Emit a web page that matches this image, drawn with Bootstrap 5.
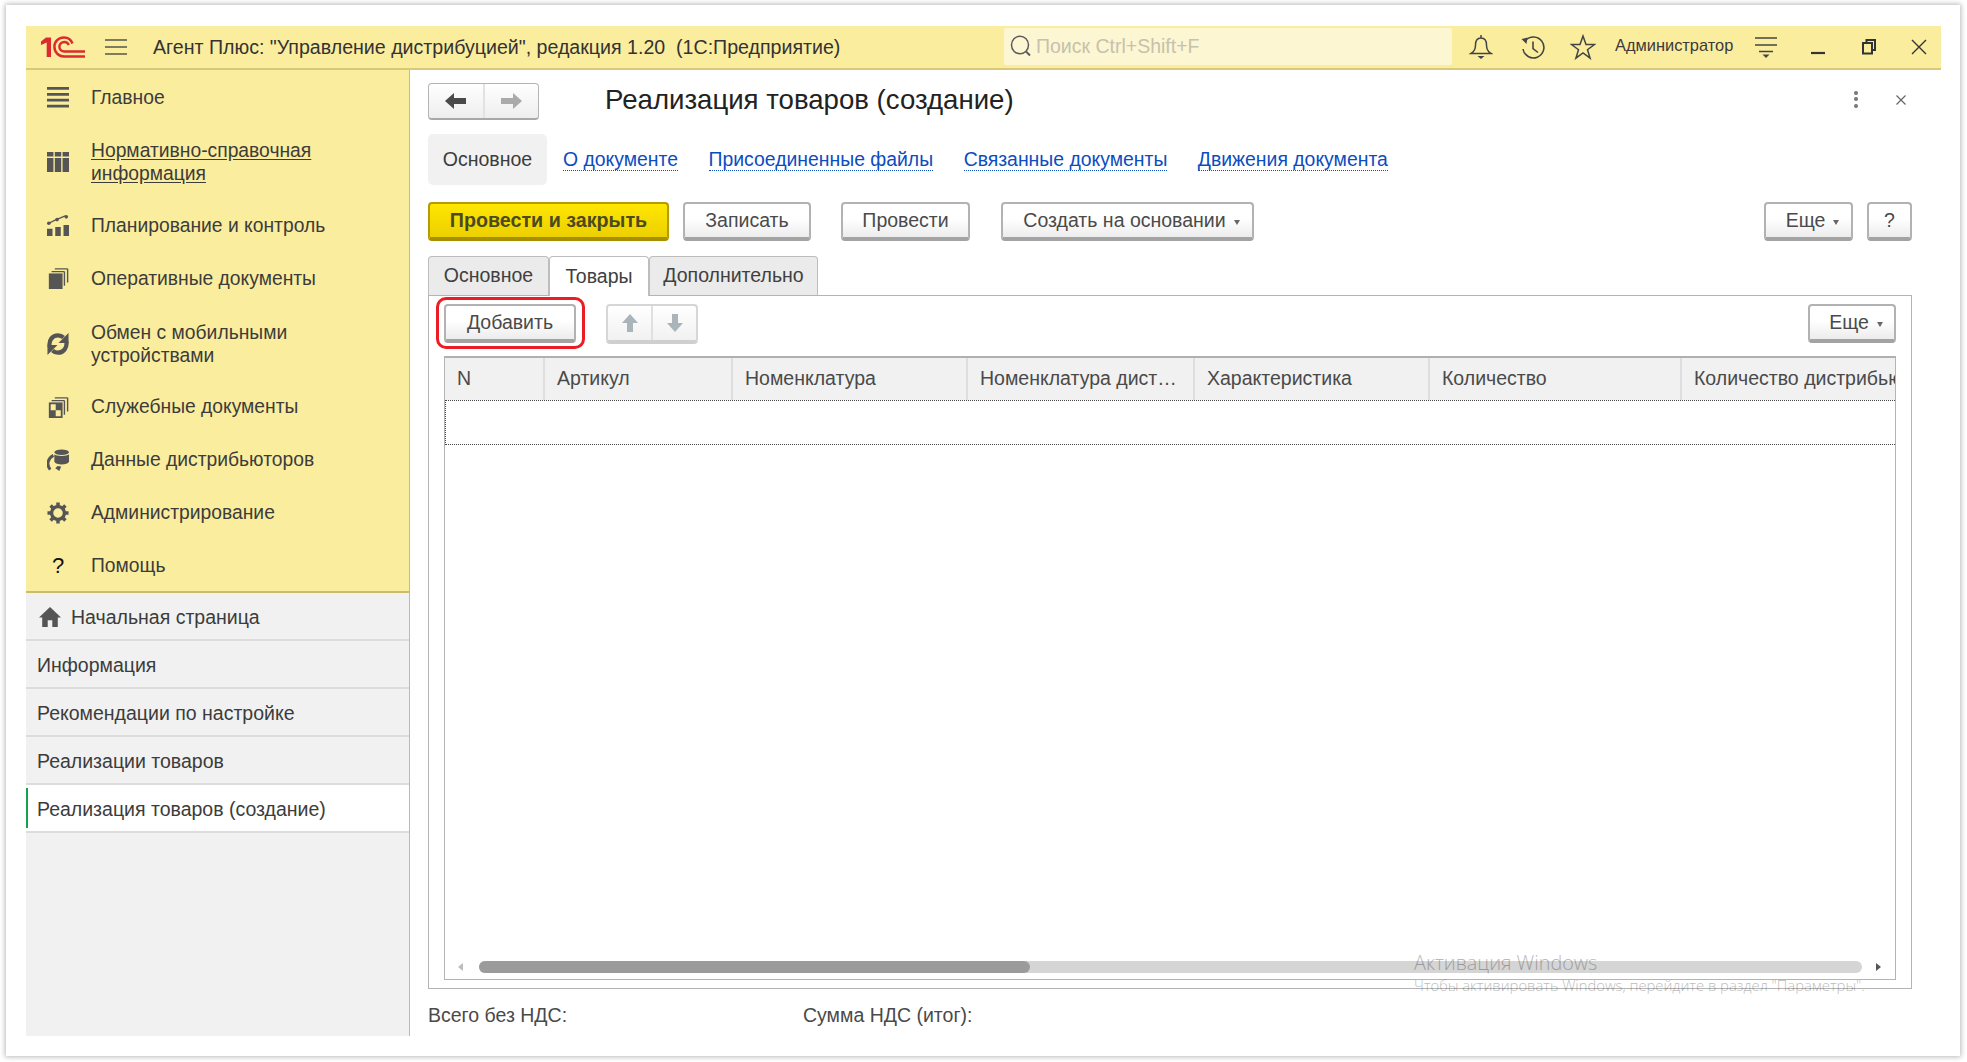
<!DOCTYPE html>
<html lang="ru">
<head>
<meta charset="utf-8">
<title>Реализация товаров (создание)</title>
<link href="https://cdn.jsdelivr.net/npm/bootstrap@5.3.0/dist/css/bootstrap.min.css" rel="stylesheet">
<style>
html,body{height:100%;margin:0;background:#fff;overflow:hidden}
body{font-family:"Liberation Sans",Arial,sans-serif;font-size:19.5px;color:#4a4a4a;line-height:23px}
.sheet{position:absolute;left:6px;top:5px;width:1954px;height:1051px;background:#fff;box-shadow:0 0 5px 1px rgba(0,0,0,.28);padding:21px 19px 20px 20px}
.appwin{height:100%;display:flex;flex-direction:column}
.topbar{height:44px;flex:none;background:#fbed9e;border-bottom:2px solid #d8c877;display:flex;align-items:center;color:#333}
.logo1c{margin-left:15px;width:44px;height:22px;flex:none}
.burger{margin-left:20px;width:22px;height:16px;flex:none}
.apptitle{margin-left:26px;width:851px;white-space:nowrap;flex:none;font-size:19.6px}
.searchbox{width:448px;height:37px;flex:none;background:#fdf6d3;border-radius:2px;display:flex;align-items:center;color:#c6c2ac;padding-left:4px;margin-top:-2px}
.searchbox svg{margin-right:2px}
.ticons{display:flex;align-items:center;flex:1}
.ti{flex:none;display:flex;justify-content:center;align-items:center}
.ti-bell{width:58px}.ti-hist{width:46px}.ti-star{width:54px}.ti-filt{width:62px}.ti-min{width:42px}.ti-rest{width:60px}.ti-close{width:40px}
.username{font-size:16.4px;margin:-3px 0 0 5px;width:120px;white-space:nowrap;flex:none;color:#3b3b3b}
.mainwrap{flex:1;display:flex;min-height:0}
.sidepane{width:384px;flex:none;background:#f1f1f1;border-right:1px solid #c9bf73;display:flex;flex-direction:column}
.sections{background:#fbed9e;border-bottom:2px solid #cdbc6b;height:523px;flex:none}
.secitem{display:flex;align-items:center;color:#3c3c3c;height:53px;font-size:19.3px}
.secitem svg{width:22px;height:24px;margin-left:21px;flex:none;fill:#555}
.secitem span{margin-left:22px}
.secitem u{text-underline-offset:2px}
.sec-a{height:54px}.sec-b{height:75px}.sec-c{height:53px}.sec-d{height:52px}.sec-e{height:72px;margin-top:4px}
.qmark{fill:#111;font-family:"Liberation Sans",sans-serif;font-size:24px}
.openitem{height:48px;padding:2px 0 0 11px;display:flex;align-items:center;border-bottom:2px solid #dcdcdc;color:#3c3c3c;background:#f1f1f1;position:relative}
.openitem.homeitem{padding-left:13px}
.homeitem svg{margin-right:10px}
.openitem.current{background:#fff}
.openitem.current::before{content:"";position:absolute;left:0;top:3px;bottom:3px;width:2px;background:#13a04f}
.docpane{flex:1;min-width:0;padding:12px 29px 0 18px;display:flex;flex-direction:column;background:#fff}
.headrow{display:flex;align-items:center;height:38px;flex:none}
.navgrp{width:111px;height:37px;border:1px solid #b4b4b4;border-bottom:2px solid #a8a8a8;border-radius:4px;background:linear-gradient(#fff,#eee);display:flex;flex:none}
.navgrp div{flex:1;display:flex;align-items:center;justify-content:center}
.navgrp div+div{border-left:2px solid #e2e2e2}
.doctitle{margin-left:66px;font-size:27.6px;color:#222;white-space:nowrap;line-height:34px;margin-top:-2px}
.kebab{margin-left:auto;margin-right:38px;width:4px;display:flex;flex-direction:column;gap:2.5px;margin-top:-4px}
.kebab i{display:block;width:4px;height:4px;border-radius:50%;background:#777}
.closer{margin-right:6px;margin-top:-3px;display:flex}
.subnav{display:flex;align-items:center;height:51px;margin-top:14px;gap:30.5px;flex:none}
.subnav .here{width:119px;height:51px;background:#f1f1f1;border-radius:5px;display:flex;align-items:center;justify-content:center;color:#3c3c3c;margin-right:-14.500px}
.subnav a{color:#0b4dc0;text-decoration:none;border-bottom:1px dotted #0b4dc0;line-height:21px;white-space:nowrap;font-size:19.4px;margin-top:1px}
.cmdrow{display:flex;height:39px;margin-top:17px;flex:none}
.cbtn{height:39px;padding:0;flex:none;display:flex;align-items:center;justify-content:center;border:2px solid #b2b2b2;border-bottom:4px solid #a3a3a3;border-radius:4px;background:linear-gradient(#fff 45%,#ececec);color:#4a4a4a;font-size:19.5px;line-height:23px}
.cbtn.hot{border-color:#b39b00;border-bottom-color:#a79000;background:linear-gradient(#ffe600,#ecd000);font-weight:700;color:#4b4a22;font-size:19.7px}
.cbtn.withcaret{padding-left:8px}
.w-hot{width:241px}.w-save{width:128px;margin-left:14px}.w-post{width:129px;margin-left:30px}.w-base{width:253px;margin-left:31px}.w-more{width:89px}.w-help{width:45px;margin-left:14px}.w-add{width:132px}.w-more2{width:88px}
.caret7{display:inline-block;border-top:5px solid #666;border-left:3.5px solid transparent;border-right:3.5px solid transparent;margin-left:8px;margin-top:3px}
.tabline{display:flex;margin-top:15px;height:39px;flex:none;position:relative;z-index:1}
.tabcell{display:flex;align-items:center;justify-content:center;background:#ebebeb;border:1px solid #bdbdbd;border-bottom:0;border-radius:4px 4px 0 0;height:39px;color:#404040;padding-bottom:1px}
.tabcell.open{background:#fff;height:40px;color:#404040}
.t-a{width:121px}.t-b{width:100px}.t-c{width:169px}
.panelbox{flex:none;height:694px;border:1px solid #b4b4b4;padding:8px 15px 8px 15px;display:flex;flex-direction:column}
.panelbar{display:flex;height:40px;flex:none;position:relative}
.redmark{position:absolute;left:-8px;top:-7px;width:149px;height:52px;border:3.5px solid #ec1c24;border-radius:10px}
.arrowgrp{margin-left:30px;width:92px;height:40px;border:2px solid #d6d6d6;border-bottom:4px solid #cfcfcf;border-radius:4px;background:linear-gradient(#fff,#f1f1f1);display:flex}
.arrowgrp div{flex:1;display:flex;align-items:center;justify-content:center}
.arrowgrp div+div{border-left:2px solid #e0e0e0}
.gridbox{flex:1;margin-top:12px;border:1px solid #b4b4b4;border-top:2px solid #b0b0b0;position:relative;overflow:hidden;display:flex;flex-direction:column}
.gridhead{height:42px;flex:none;display:flex;background:#f1f1f1;white-space:nowrap;overflow:hidden}
.gridhead div{flex:none;padding:0 0 2px 12px;display:flex;align-items:center;border-right:2px solid #dedede;overflow:hidden}
.c-1{width:100px}.c-2{width:188px}.c-3{width:235px}.c-4{width:227px}.c-5{width:235px}.c-6{width:252px}
.gridhead .c-7{width:300px;border-right:0}
.gridrow{height:45px;flex:none;border:1px dotted #444;border-right:0}
.gridfill{flex:1}
.hscroll{position:absolute;left:0;right:0;bottom:6px;height:12px;display:flex;align-items:center}
.hleft{margin-left:13px;width:0;height:0;border-right:5px solid #bdbdbd;border-top:4px solid transparent;border-bottom:4px solid transparent}
.htrack{margin-left:16px;width:1383px;height:12px;background:#d5d5d5;border-radius:6px;display:flex}
.hthumb{width:551px;height:12px;background:#9b9b9b;border-radius:6px}
.hright{margin-left:14px;width:0;height:0;border-left:5px solid #555;border-top:4px solid transparent;border-bottom:4px solid transparent}
.totals{display:flex;height:23px;margin-top:15px;flex:none}
.totals span:first-child{width:375px}
.winmark{position:absolute;left:1414px;top:949px;color:#000;opacity:.27;font-family:"Open Sans",sans-serif;font-weight:300;pointer-events:none;white-space:nowrap;z-index:3}
.winmark b{display:block;font-weight:300;font-size:19.8px;line-height:27px}
.winmark small{display:block;font-size:14.8px;line-height:18px}
</style>
</head>
<body>
<div class="sheet">
<div class="appwin">
  <header class="topbar">
    <svg class="logo1c" viewBox="0 0 44 22" fill="none" stroke="#dc2a2e">
      <path d="M0 5.500 5 1.500H10V21H5.700V6.500L0 9z" fill="#dc2a2e" stroke="none"/>
      <path d="M31.500 7.500C30 3.500 26.500 1.500 23 1.500 17.500 1.500 13.400 5.500 13.400 10.800S17.500 20.500 23 20.500H44" stroke-width="2.500"/>
      <path d="M27.800 9C27 7 25.300 6 23.400 6 20.500 6 18.400 8 18.400 10.800S20.500 15.500 23.400 15.500H44" stroke-width="2.500"/>
    </svg>
    <svg class="burger" viewBox="0 0 22 16" stroke="#55554a" stroke-width="1.600"><path d="M0 1H22M0 8H22M0 15H22"/></svg>
    <div class="apptitle">Агент Плюс: "Управление дистрибуцией", редакция 1.20&nbsp; (1С:Предприятие)</div>
    <div class="searchbox">
      <svg width="26" height="26" viewBox="0 0 26 26" fill="none" stroke="#5b5b5b" stroke-width="1.500"><ellipse cx="12" cy="12" rx="8.500" ry="8.700"/><path d="M18 18.500l4 4" stroke-width="2"/></svg>
      <span>Поиск Ctrl+Shift+F</span>
    </div>
    <div class="ticons">
      <div class="ti ti-bell"><svg width="24" height="26" viewBox="0 0 24 26" fill="none" stroke="#444" stroke-width="1.500"><path d="M12 1v3M12 4c-4 0-5.500 3-5.500 7 0 4-1 6.500-4.500 8.500h20c-3.500-2-4.500-4.500-4.500-8.500 0-4-1.500-7-5.500-7z"/><path d="M8.500 22h7L12 25z" fill="#444" stroke="none"/></svg></div>
      <div class="ti ti-hist"><svg width="26" height="26" viewBox="0 0 26 26" fill="none" stroke="#444" stroke-width="1.600"><path d="M5.500 6.500A10.500 10.500 0 1 1 3 15"/><path d="M1.500 5 7.500 3.500 6.500 10z" fill="#444" stroke="none"/><path d="M13 7.500v7l5 4"/></svg></div>
      <div class="ti ti-star"><svg width="26" height="26" viewBox="0 0 26 26" fill="none" stroke="#444" stroke-width="1.500"><path d="M13 2l3 8.500h8.500l-7 5.200 2.600 8.500-7.100-5.200-7.100 5.200 2.600-8.500-7-5.200H10z"/></svg></div>
      <div class="username">Администратор</div>
      <div class="ti ti-filt"><svg width="22" height="24" viewBox="0 0 22 24" fill="#444" stroke="#444" stroke-width="1.500"><path d="M0 3H22M0 10H22M4 16.500H18" fill="none"/><path d="M7.500 19.500h7L11 23z" stroke="none"/></svg></div>
      <div class="ti ti-min"><svg width="16" height="22" viewBox="0 0 16 22"><path d="M1 17H15" stroke="#333" stroke-width="2.200"/></svg></div>
      <div class="ti ti-rest"><svg width="16" height="18" viewBox="0 0 16 18" fill="none" stroke="#333" stroke-width="2"><path d="M5.500 4.500V2H14V12H11"/><rect x="2" y="5" width="9" height="10.500"/></svg></div>
      <div class="ti ti-close"><svg width="16" height="18" viewBox="0 0 16 18" fill="none" stroke="#333" stroke-width="1.400"><path d="M1 2 15 16M15 2 1 16"/></svg></div>
    </div>
  </header>
  <div class="mainwrap">
    <aside class="sidepane">
      <nav class="sections">
        <div class="secitem sec-a"><svg viewBox="0 0 24 24"><path d="M0 1h24v3H0zM0 7.500h24v3H0zM0 14h24v3H0zM0 20.500h24v3H0z"/></svg><span>Главное</span></div>
        <div class="secitem sec-b"><svg viewBox="0 0 24 24"><path d="M0 1h7v5H0zM8.500 1h7v5h-7zM17 1h7v5h-7zM0 7.500h7V23H0zM8.500 7.500h7V23h-7zM17 7.500h7V23h-7z"/></svg><span><u>Нормативно-справочная<br>информация</u></span></div>
        <div class="secitem sec-c"><svg viewBox="0 0 24 24"><path d="M0 15h6v8H0zM9 13h6v10H9zM18 11h6v12h-6z"/><path d="M2 9l8-4 10-4" fill="none" stroke="#555" stroke-width="1.500"/><circle cx="2" cy="9" r="2"/><circle cx="11" cy="5" r="2"/><circle cx="21" cy="2" r="2"/></svg><span>Планирование и контроль</span></div>
        <div class="secitem sec-d"><svg viewBox="0 0 24 24"><path d="M2 7h15v17H2z"/><path d="M19 5v15.500M22.500 2v15M5 5h14M8.500 2h14" fill="none" stroke="#555" stroke-width="1.500"/></svg><span>Оперативные документы</span></div>
        <div class="secitem sec-e"><svg viewBox="0 0 24 24"><path d="M3 15C1.500 8 6 2.500 12 2.500c2.500 0 4.500 1 6 2.500" stroke="#555" stroke-width="4.600" fill="none"/><path d="M21 9c1.500 7-3 12.500-9 12.500-2.500 0-4.500-1-6-2.500" stroke="#555" stroke-width="4.600" fill="none"/><path d="M23.500 0v11h-11zM.5 24V13h11z"/></svg><span>Обмен с мобильными<br>устройствами</span></div>
        <div class="secitem"><svg viewBox="0 0 24 24"><path d="M2 7h15v17H2z"/><path d="M19 5v15.500M22.500 2v15M5 5h14M8.500 2h14" fill="none" stroke="#555" stroke-width="1.500"/><path d="M4 9h5.500v6.500H4zM9.500 15.500H15V22H9.500z" fill="#fbed9e"/></svg><span>Служебные документы</span></div>
        <div class="secitem"><svg viewBox="0 0 24 24"><ellipse cx="16" cy="3.500" rx="8" ry="3"/><path d="M8 6c2 2 14 2 16 0v8c-1 2-4 3-8 3C12 17 9 16 8 14z"/><path d="M7 7C1 10-1 17 3.500 22.500" fill="none" stroke="#555" stroke-width="3.200"/><path d="M9 21l2.500-2.500 4 .5-2 5z"/></svg><span>Данные дистрибьюторов</span></div>
        <div class="secitem"><svg viewBox="0 0 24 24"><circle cx="12" cy="12" r="7" stroke="#555" stroke-width="3.600" fill="none"/><path d="M12 .5v5M12 18.500v5M.5 12h5M18.500 12h5M3.900 3.900l3.500 3.500M16.600 16.600l3.500 3.500M20.100 3.900l-3.500 3.500M7.400 16.600l-3.500 3.500" stroke="#555" stroke-width="3.800" fill="none"/></svg><span>Администрирование</span></div>
        <div class="secitem"><svg viewBox="0 0 24 24"><text class="qmark" x="12" y="20" text-anchor="middle">?</text></svg><span>Помощь</span></div>
      </nav>
      <div class="openitem homeitem"><svg width="22" height="20" viewBox="0 0 24 21" fill="#555" preserveAspectRatio="none"><path d="M12 0 24 11h-3.500v10h-6v-7h-5v7h-6V11H0z"/></svg><span>Начальная страница</span></div>
      <div class="openitem">Информация</div>
      <div class="openitem">Рекомендации по настройке</div>
      <div class="openitem">Реализации товаров</div>
      <div class="openitem current">Реализация товаров (создание)</div>
    </aside>
    <main class="docpane">
      <div class="headrow">
        <div class="navgrp">
          <div><svg width="22" height="18" viewBox="0 0 22 18" fill="#4a4a4a"><path d="M0 9 9 1v5h12v6H9v5z"/></svg></div>
          <div><svg width="22" height="18" viewBox="0 0 22 18" fill="#aaa"><path d="M22 9 13 1v5H1v6h12v5z"/></svg></div>
        </div>
        <div class="doctitle">Реализация товаров (создание)</div>
        <div class="kebab"><i></i><i></i><i></i></div>
        <div class="closer"><svg width="10" height="10" viewBox="0 0 10 10" fill="none" stroke="#666" stroke-width="1.200"><path d="M.5.500l9 9M9.500.500l-9 9"/></svg></div>
      </div>
      <div class="subnav">
        <div class="here">Основное</div>
        <a href="#">О документе</a><a href="#">Присоединенные файлы</a><a href="#">Связанные документы</a><a href="#">Движения документа</a>
      </div>
      <div class="cmdrow">
        <button class="btn cbtn hot w-hot">Провести и закрыть</button>
        <button class="btn cbtn w-save">Записать</button>
        <button class="btn cbtn w-post">Провести</button>
        <button class="btn cbtn withcaret w-base">Создать на основании<i class="caret7"></i></button>
        <button class="btn cbtn withcaret ms-auto w-more">Еще<i class="caret7"></i></button>
        <button class="btn cbtn w-help">?</button>
      </div>
      <div class="tabline">
        <div class="tabcell t-a">Основное</div>
        <div class="tabcell open t-b">Товары</div>
        <div class="tabcell t-c">Дополнительно</div>
      </div>
      <section class="panelbox">
        <div class="panelbar">
          <button class="btn cbtn w-add">Добавить</button>
          <div class="redmark"></div>
          <div class="arrowgrp">
            <div><svg width="18" height="20" viewBox="0 0 18 20" fill="#a9b4bb"><path d="M9 1 17 10h-5v9H6v-9H1z"/></svg></div>
            <div><svg width="18" height="20" viewBox="0 0 18 20" fill="#a9b4bb"><path d="M9 19 17 10h-5V1H6v9H1z"/></svg></div>
          </div>
          <button class="btn cbtn withcaret ms-auto w-more2">Еще<i class="caret7"></i></button>
        </div>
        <div class="gridbox">
          <div class="gridhead">
            <div class="c-1">N</div>
            <div class="c-2">Артикул</div>
            <div class="c-3">Номенклатура</div>
            <div class="c-4">Номенклатура дист…</div>
            <div class="c-5">Характеристика</div>
            <div class="c-6">Количество</div>
            <div class="c-7">Количество дистрибьютора</div>
          </div>
          <div class="gridrow"></div>
          <div class="gridfill"></div>
          <div class="hscroll"><i class="hleft"></i><div class="htrack"><div class="hthumb"></div></div><i class="hright"></i></div>
        </div>
      </section>
      <div class="totals"><span>Всего без НДС:</span><span>Сумма НДС (итог):</span></div>
    </main>
  </div>
</div>
</div>
<div class="winmark"><b>Активация Windows</b><small>Чтобы активировать Windows, перейдите в раздел "Параметры".</small></div>
<script src="https://cdn.jsdelivr.net/npm/bootstrap@5.3.0/dist/js/bootstrap.bundle.min.js"></script>
</body>
</html>
